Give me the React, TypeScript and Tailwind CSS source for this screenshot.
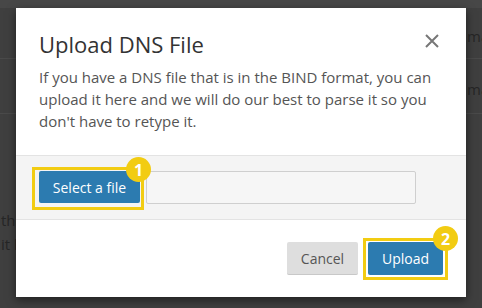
import React from "react";

export default function App() {
  const font = { fontFamily: '"Open Sans", "Noto Sans", sans-serif' };
  return (
    <div className="relative w-[482px] h-[308px] overflow-hidden bg-[#3f3f3f]" style={font}>
      {/* background page (dimmed) */}
      <div className="flex flex-col text-[15px] text-[#262626] whitespace-nowrap">
        <div className="h-[8px] bg-[#474747]" />
        <div className="h-[51px] border-b border-[#4a4a4a] flex items-center pl-[467px] pt-[6px]">ma</div>
        <div className="h-[55px] border-b border-[#4a4a4a] flex items-center pl-[467px] pt-[6px]">ma</div>
        <div className="pt-[94px] pl-[1px] leading-[24px] text-[15px]">
          <div>the</div>
          <div>it h</div>
        </div>
      </div>

      {/* modal */}
      <div className="absolute left-[16px] top-[8px] w-[450px] h-[289px] bg-white flex flex-col shadow-[0_3px_9px_rgba(0,0,0,0.5)]">
        <div className="relative px-[23px] pt-[21px] h-[147px]">
          <div className="text-[22px] leading-[30px] text-[#333]">Upload DNS File</div>
          <div className="mt-[7px] text-[15px] leading-[22px] text-[#555]">
            If you have a DNS file that is in the BIND format, you can upload it here and we will do our best to parse it so you don't have to retype it.
          </div>
          <svg className="absolute left-[409px] top-[26px]" width="14" height="14" viewBox="0 0 14 14">
            <path d="M1 1 L13 13 M13 1 L1 13" stroke="#777" strokeWidth="2" />
          </svg>
        </div>
        <div className="h-[65px] bg-[#f4f4f4] border-y border-[#e3e3e3] flex items-start px-[23px] pt-[15px] gap-[6px]">
          <div className="relative">
            <button className="w-[101px] h-[32px] bg-[#2c7bb0] text-white text-[14px] rounded-[2px]">Select a file</button>
            <div className="absolute left-[-7px] top-[-4px] w-[112px] h-[43px] border-[3px] border-[#f2cc12]" />
            <div className="absolute left-[87px] top-[-14px] w-[25px] h-[25px] rounded-full bg-[#f2cc12] text-white text-[16px] font-bold flex items-center justify-center leading-none">1</div>
          </div>
          <div className="w-[270px] h-[33px] border border-[#cfcfcf] rounded-[2px] bg-[#f6f6f6]" />
        </div>
        <div className="flex-1 flex justify-end items-start pt-[22px] px-[23px] gap-[10px]">
          <button className="w-[71px] h-[33px] bg-[#dedede] text-[#555] text-[14px] rounded-[2px] border-b border-[#c8c8c8]">Cancel</button>
          <div className="relative">
            <button className="w-[75px] h-[33px] bg-[#2c7bb0] text-white text-[14px] rounded-[2px]">Upload</button>
            <div className="absolute left-[-5px] top-[-4px] w-[85px] h-[42px] border-[3px] border-[#f2cc12]" />
            <div className="absolute left-[65px] top-[-16px] w-[25px] h-[25px] rounded-full bg-[#f2cc12] text-white text-[16px] font-bold flex items-center justify-center leading-none">2</div>
          </div>
        </div>
      </div>
    </div>
  );
}
